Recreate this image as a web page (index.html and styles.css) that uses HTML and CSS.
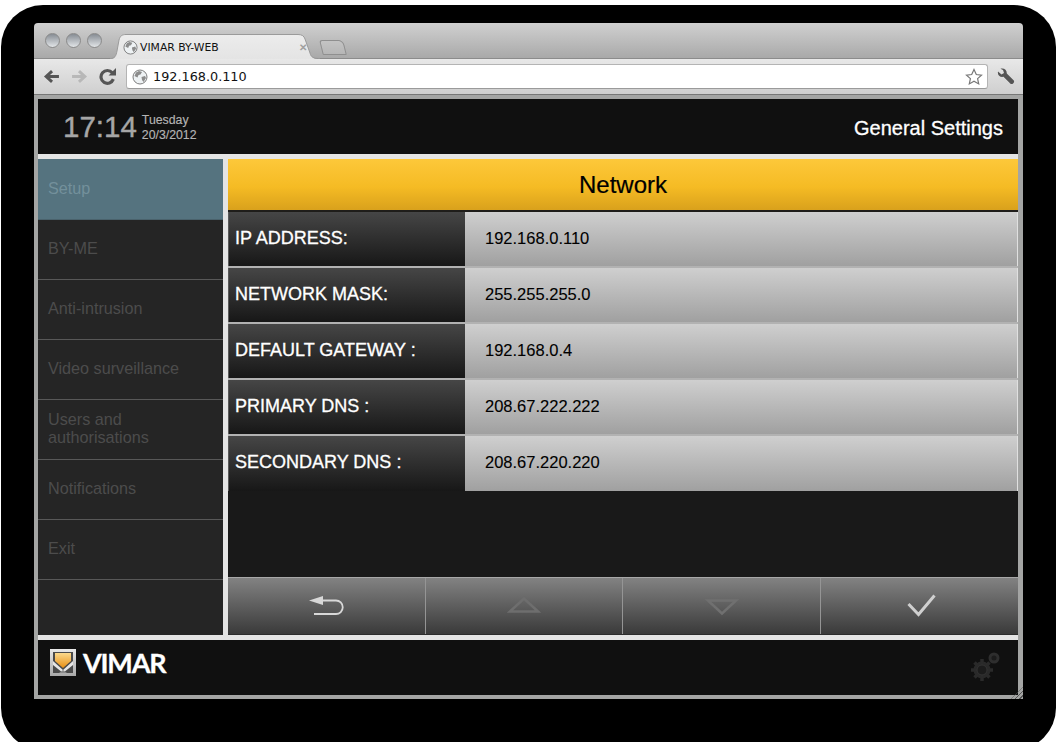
FILE: index.html
```html
<!DOCTYPE html>
<html lang="en">
<head>
    <meta charset="UTF-8">
    <meta name="viewport" content="width=device-width, initial-scale=1.0">
    <title>VIMAR BY-WEB</title>
    <link rel="stylesheet" href="styles.css">
</head>
<body>
    <div class="backdrop">
        <div class="window">
            <div class="tabstrip">
                <div class="lights">
                    <span class="light"></span>
                    <span class="light"></span>
                    <span class="light"></span>
                </div>
                <div class="tab">
                    <svg class="tab-shape" viewBox="0 0 210 25" preserveAspectRatio="none">
                        <defs>
                            <linearGradient id="tabFill" x1="0" y1="0" x2="0" y2="1">
                                <stop offset="0" stop-color="#ececec"/>
                                <stop offset="1" stop-color="#e4e4e4"/>
                            </linearGradient>
                        </defs>
                        <path d="M0 25C5 25 6 22 7 17L9 6C10 2 12 .5 16 .5H188C192 .5 194 2 195 5L200 19C201 23 203 25 210 25z" fill="url(#tabFill)"/>
                        <path d="M0 24.500C5 24.500 6 22 7 17L9 6C10 2 12 .5 16 .5H188C192 .5 194 2 195 5L200 19C201 23 203 24.500 210 24.500" fill="none" stroke="#9a9a9a"/>
                    </svg>
                    <svg class="globe" viewBox="0 0 16 16">
                        <circle cx="8" cy="8" r="7" fill="#eef2f4" stroke="#7c7c7c"/>
                        <path d="M4 3.500l3-1.500 3 1-1.500 2.500-2 .5-1 2.500-3-1.500zM9.500 8l3.500-1 1 2-2.500 4-1.500-2z" fill="#8c8c8c"/>
                    </svg>
                    <span class="tab-title">VIMAR BY-WEB</span>
                    <span class="tab-close">✕</span>
                </div>
                <div class="newtab"></div>
            </div>

            <div class="toolbar">
                <svg class="nav-icon" viewBox="0 0 16 16">
                    <path d="M15 8H4M8.500 3L3 8l5.500 5" fill="none" stroke="#555" stroke-width="2.800"/>
                </svg>
                <svg class="nav-icon" viewBox="0 0 16 16">
                    <path d="M1 8H12M7.500 3L13 8l-5.500 5" fill="none" stroke="#b8b8b8" stroke-width="2.800"/>
                </svg>
                <svg class="nav-icon" viewBox="0 0 16 16">
                    <path d="M13.500 10.500A6 6 0 1 1 12.500 4.500" fill="none" stroke="#555" stroke-width="3"/>
                    <path d="M9 7h7V0z" fill="#555"/>
                </svg>
                <div class="omnibox">
                    <svg class="globe" viewBox="0 0 16 16">
                        <circle cx="8" cy="8" r="7" fill="#eef2f4" stroke="#7c7c7c"/>
                        <path d="M4 3.500l3-1.500 3 1-1.500 2.500-2 .5-1 2.500-3-1.500zM9.500 8l3.500-1 1 2-2.500 4-1.500-2z" fill="#8c8c8c"/>
                    </svg>
                    <span class="url">192.168.0.110</span>
                    <svg class="star" viewBox="0 0 18 18">
                        <path d="M9 1.500l2.300 5 5.200.6-3.900 3.500 1.100 5.300L9 13.200l-4.700 2.700 1.100-5.300L1.500 7.100l5.200-.6z" fill="#fff" stroke="#777" stroke-width="1.200"/>
                    </svg>
                </div>
                <svg class="wrench" viewBox="0 0 18 18">
                    <path d="M1 3.500L4.500 6.500 7 5 6 2 3.500 .8C7-.2 10 2 9.800 5.500L16.800 12.500C18 14 15.500 17 13.500 15.800L6.500 8.800C3 9.500 .2 7 1 3.500z" fill="#555"/>
                </svg>
            </div>

            <div class="frame">
                <header class="topbar">
                    <div class="clock">
                        <span class="time">17:14</span>
                        <div class="date">
                            <span>Tuesday</span>
                            <span>20/3/2012</span>
                        </div>
                    </div>
                    <span class="page-name">General Settings</span>
                </header>

                <div class="middle">
                    <nav class="menu">
                        <div class="menu-item active">Setup</div>
                        <div class="menu-item">BY-ME</div>
                        <div class="menu-item">Anti-intrusion</div>
                        <div class="menu-item">Video surveillance</div>
                        <div class="menu-item">Users and<br>authorisations</div>
                        <div class="menu-item">Notifications</div>
                        <div class="menu-item">Exit</div>
                    </nav>

                    <main class="panel">
                        <div class="panel-title">Network</div>
                        <div class="rows">
                            <div class="row">
                                <div class="row-label">IP ADDRESS:</div>
                                <div class="row-value">192.168.0.110</div>
                            </div>
                            <div class="row">
                                <div class="row-label">NETWORK MASK:</div>
                                <div class="row-value">255.255.255.0</div>
                            </div>
                            <div class="row">
                                <div class="row-label">DEFAULT GATEWAY :</div>
                                <div class="row-value">192.168.0.4</div>
                            </div>
                            <div class="row">
                                <div class="row-label">PRIMARY DNS :</div>
                                <div class="row-value">208.67.222.222</div>
                            </div>
                            <div class="row">
                                <div class="row-label">SECONDARY DNS :</div>
                                <div class="row-value">208.67.220.220</div>
                            </div>
                        </div>
                        <div class="actions">
                            <div class="action">
                                <svg width="36" height="24" viewBox="0 0 36 24">
                                    <path d="M10 6.500h17a6.700 6.700 0 0 1 0 13.500H5" fill="none" stroke="#d8d8d8" stroke-width="1.800"/>
                                    <path d="M0 6.500L14 2v9z" fill="#d8d8d8"/>
                                </svg>
                            </div>
                            <div class="action">
                                <svg width="34" height="20" viewBox="0 0 34 20">
                                    <path d="M3 15.500L17 2.500l14 13z" fill="none" stroke="#6e6e6e" stroke-width="2.500"/>
                                </svg>
                            </div>
                            <div class="action">
                                <svg width="34" height="20" viewBox="0 0 34 20">
                                    <path d="M3 4.500h28L17 17.500z" fill="none" stroke="#707070" stroke-width="2.500"/>
                                </svg>
                            </div>
                            <div class="action">
                                <svg width="32" height="24" viewBox="0 0 32 24">
                                    <path d="M4.500 10l10 10.500L30.500 1.500" fill="none" stroke="#cfcfcf" stroke-width="3"/>
                                </svg>
                            </div>
                        </div>
                    </main>
                </div>

                <footer class="bottombar">
                    <div class="brand">
                        <svg class="brand-mark" viewBox="0 0 26 27">
                            <defs>
                                <linearGradient id="markFrame" x1="0" y1="0" x2="0" y2="1">
                                    <stop offset="0" stop-color="#e8e8e8"/>
                                    <stop offset="1" stop-color="#a8a8a8"/>
                                </linearGradient>
                                <linearGradient id="markFill" x1="0" y1="0" x2="0" y2="1">
                                    <stop offset="0" stop-color="#fbd98c"/>
                                    <stop offset="1" stop-color="#e88f14"/>
                                </linearGradient>
                            </defs>
                            <rect width="26" height="27" fill="url(#markFrame)"/>
                            <rect x="3" y="3" width="20" height="21" fill="#4a4a4a"/>
                            <path d="M5 4h16v8l-8 7-8-7z" fill="url(#markFill)"/>
                            <path d="M3 12l10 9 10-9v4l-10 8-10-8z" fill="#e6e6e6"/>
                            <path d="M9 24l4-3 4 3z" fill="#8a8a8a"/>
                        </svg>
                        <span class="brand-name">VIMAR</span>
                    </div>
                    <svg class="gears" viewBox="0 0 30 30">
                        <circle cx="11" cy="19" r="8.500" fill="#2a2a2a"/>
                        <path d="M11 8v22M0 19h22M3.500 11.500l15 15M3.500 26.500l15-15" stroke="#2a2a2a" stroke-width="3.500"/>
                        <circle cx="11" cy="19" r="5" fill="#1c1c1c" stroke="#333"/>
                        <circle cx="23" cy="7" r="4" fill="#1c1c1c" stroke="#2e2e2e" stroke-width="3"/>
                    </svg>
                    <span class="grip"></span>
                </footer>
            </div>
        </div>
    </div>
</body>
</html>
```
FILE: styles.css
```css
:root {
    --frame-gray: #a4a5a4;
    --stripe: #e4e4e4;
    --bar-black: #101010;
    --menu-bg: #252525;
    --menu-text: #4c4c4c;
}

* {
    margin: 0;
    padding: 0;
    box-sizing: border-box;
}

html, body {
    height: 100%;
    background: #fff;
    overflow: hidden;
}

body {
    font-family: 'Liberation Sans', Arial, sans-serif;
}

/* Black rounded drop shadow behind the window */
.backdrop {
    width: 1055px;
    height: 745px;
    margin: 5px 0 0 1px;
    padding: 18px 0 0 33px;
    background: #000;
    border-radius: 42px;
}

.window {
    width: 989px;
    height: 676px;
    display: flex;
    flex-direction: column;
    border-radius: 4px 4px 0 0;
    overflow: hidden;
}

/* Browser chrome */
.tabstrip {
    height: 36px;
    flex: none;
    display: flex;
    align-items: flex-end;
    padding-left: 11px;
    background: linear-gradient(#d0d0d0, #a9a9a9);
    border-bottom: 1px solid #8c8c8c;
}

.lights {
    display: flex;
    gap: 6px;
    align-self: flex-start;
    margin-top: 10px;
}

.light {
    width: 15px;
    height: 15px;
    border-radius: 50%;
    border: 1px solid #8a8a8a;
    background: linear-gradient(#868c93, #e2e5e8);
}

.tab {
    width: 210px;
    height: 25px;
    margin-left: 8px;
    margin-bottom: -1px;
    padding: 1px 13px 0 13px;
    display: flex;
    align-items: center;
    gap: 2px;
    position: relative;
}

.tab-shape {
    position: absolute;
    top: 0;
    left: 0;
    width: 100%;
    height: 100%;
}

.tab .globe,
.tab-title,
.tab-close {
    position: relative;
}

.tab .globe {
    width: 15px;
    height: 15px;
}

.globe {
    width: 16px;
    height: 16px;
    flex: none;
}

.tab-title {
    flex: 1;
    font-family: 'DejaVu Sans', sans-serif;
    font-size: 10.800px;
    color: #111;
}

.tab-close {
    font-size: 10px;
    font-weight: 700;
    color: #a0a0a0;
}

.newtab {
    width: 24px;
    height: 15px;
    margin: 0 0 3px 1px;
    background: linear-gradient(#c4c4c4, #b6b6b6);
    border: 1px solid #8f8f8f;
    border-radius: 3px 5px 1px 1px;
    transform: skewX(14deg);
}

.toolbar {
    height: 35px;
    flex: none;
    display: flex;
    align-items: center;
    padding: 0 8px 0 9px;
    background: linear-gradient(#e8e8e8, #cfcfcf);
}

.nav-icon {
    width: 17px;
    height: 17px;
    flex: none;
    margin-right: 11px;
}

.omnibox {
    flex: 1;
    height: 25px;
    margin-left: -1px;
    padding: 0 4px 0 5px;
    display: flex;
    align-items: center;
    gap: 5px;
    background: #fff;
    border: 1px solid #b4b4b4;
    border-bottom-color: #9a9a9a;
    border-radius: 3px;
}

.url {
    flex: 1;
    font-family: 'DejaVu Sans', sans-serif;
    font-size: 12.800px;
    color: #111;
}

.star {
    width: 18px;
    height: 18px;
}

.wrench {
    width: 18px;
    height: 18px;
    margin-left: 9px;
}

/* Touch panel frame */
.frame {
    flex: 1;
    min-height: 0;
    display: flex;
    flex-direction: column;
    padding: 4px 5px 4px 4px;
    background: var(--frame-gray);
    border-top: 1px solid #777;
    position: relative;
}

.topbar {
    height: 55px;
    flex: none;
    display: flex;
    align-items: center;
    justify-content: space-between;
    padding: 1px 15px 0 25px;
    background: var(--bar-black);
}

.clock {
    display: flex;
    align-items: center;
    gap: 5px;
}

.time {
    font-size: 29.500px;
    color: #a6a6a6;
    -webkit-text-stroke: 0.4px #a6a6a6;
}

.date {
    display: flex;
    flex-direction: column;
    padding-top: 1px;
    font-size: 12.300px;
    line-height: 14.500px;
    color: #b4b4b4;
    -webkit-text-stroke: 0.15px #b4b4b4;
}

.page-name {
    padding-top: 2px;
    font-size: 20px;
    color: #fff;
    -webkit-text-stroke: 0.3px #fff;
}

.middle {
    flex: 1;
    min-height: 0;
    display: flex;
    gap: 5px;
    padding: 5px 0;
    background: var(--stripe);
}

.menu {
    width: 185px;
    flex: none;
    background: var(--menu-bg);
}

.menu-item {
    height: 60px;
    display: flex;
    align-items: center;
    padding: 0 0 3px 10px;
    font-size: 16.200px;
    line-height: 18px;
    color: var(--menu-text);
    background: var(--menu-bg);
    border-bottom: 1px solid #585858;
}

.menu-item.active {
    height: 61px;
    padding-bottom: 2px;
    background: #55737f;
    color: #73909b;
    border-bottom-color: #4a626c;
}

.panel {
    flex: 1;
    min-width: 0;
    display: flex;
    flex-direction: column;
    background: #191919;
}

.panel-title {
    height: 53px;
    flex: none;
    display: flex;
    align-items: center;
    justify-content: center;
    font-size: 24px;
    color: #000;
    -webkit-text-stroke: 0.2px #000;
    background: linear-gradient(#fdc83a 0%, #f5bb24 55%, #d9a11c 100%);
    border-bottom: 2px solid #1f1d1a;
}

.rows {
    flex: 1;
}

.row {
    height: 56px;
    display: flex;
    border-bottom: 2px solid #b2b2b2;
}

.row:last-child {
    height: 55px;
    border-bottom: none;
}

.row-label {
    width: 237px;
    display: flex;
    align-items: center;
    padding: 0 0 1px 6px;
    font-size: 18px;
    color: #fff;
    -webkit-text-stroke: 0.3px #fff;
    background: linear-gradient(#464646, #171717);
    border-left: 1px solid #5a5a5a;
}

.row:last-child .row-label {
    padding-bottom: 3px;
}

.row-value {
    flex: 1;
    display: flex;
    align-items: center;
    padding: 0 0 2px 20px;
    font-size: 16.500px;
    color: #000;
    -webkit-text-stroke: 0.1px #000;
    background: linear-gradient(#cfcfcf, #a0a0a0);
    border-right: 1px solid #e0e0e0;
}

.actions {
    height: 58px;
    flex: none;
    display: grid;
    grid-template-columns: 197px 197px 198px 1fr;
    border-top: 1px solid #a8a8a8;
    border-bottom: 1px solid #2c2c2c;
    background: linear-gradient(#828282, #3a3a3a);
}

.action {
    display: flex;
    align-items: center;
    justify-content: center;
    border-left: 1px solid #959595;
}

.action:first-child {
    border-left: none;
}

.bottombar {
    height: 55px;
    flex: none;
    display: flex;
    align-items: center;
    justify-content: space-between;
    padding: 0 17px 3px 12px;
    background: var(--bar-black);
}

.brand {
    display: flex;
    align-items: center;
    gap: 7px;
    margin-bottom: 7px;
}

.brand-mark {
    width: 26px;
    height: 27px;
}

.brand-name {
    font-family: 'Lato', 'Liberation Sans', sans-serif;
    font-size: 27px;
    line-height: 27px;
    font-weight: 700;
    color: #fff;
    letter-spacing: -1.200px;
    -webkit-text-stroke: 0.3px #fff;
}

.gears {
    width: 30px;
    height: 30px;
}

.grip {
    position: absolute;
    right: 0;
    bottom: 0;
    width: 12px;
    height: 12px;
    background: repeating-linear-gradient(135deg, transparent 0 2px, #555 2px 3px);
    clip-path: polygon(100% 0, 100% 100%, 0 100%);
}
```
